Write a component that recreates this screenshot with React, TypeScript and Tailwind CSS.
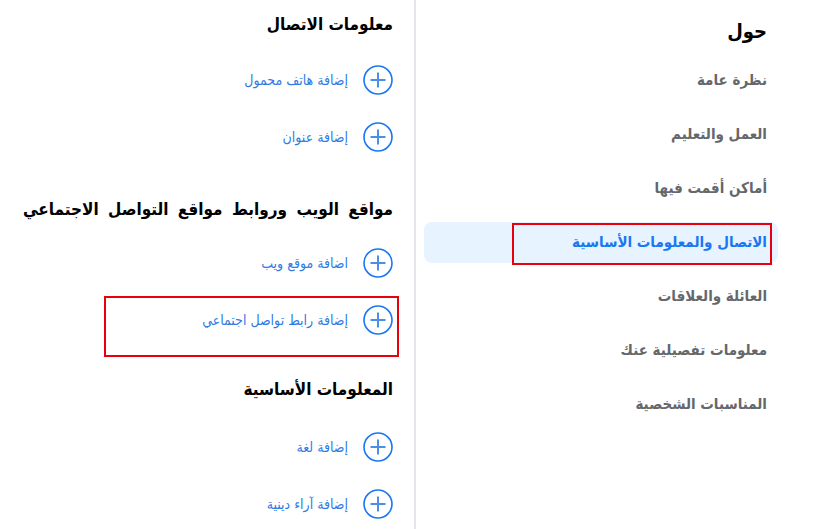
import React from "react";

const sideItems = [
  "نظرة عامة",
  "العمل والتعليم",
  "أماكن أقمت فيها",
  "الاتصال والمعلومات الأساسية",
  "العائلة والعلاقات",
  "معلومات تفصيلية عنك",
  "المناسبات الشخصية",
];

const PlusCircle: React.FC = () => (
  <svg width="30" height="30" viewBox="0 0 30 30" className="shrink-0">
    <circle cx="15" cy="15" r="14" fill="none" stroke="#1877f2" strokeWidth="1.6" />
    <path d="M15 7.5v15M7.5 15h15" stroke="#4b8fe8" strokeWidth="2" />
  </svg>
);

const AddRow: React.FC<{ label: string; marked?: boolean }> = ({ label, marked }) => (
  <div className="relative flex items-center gap-[15px] h-[30px]">
    <PlusCircle />
    <span className="text-[14px] text-[#2f7ae5]">{label}</span>
    {marked && (
      <div className="absolute right-[-6px] top-[-9px] w-[295px] h-[61px] border-2 border-[#e8000b]" />
    )}
  </div>
);

const Section: React.FC<{
  title: string;
  items: string[];
  marked?: number;
  className?: string;
  titleClass?: string;
  listClass?: string;
}> = ({ title, items, marked, className, titleClass, listClass }) => (
  <div className={className}>
    <h2 className={"text-[17px] font-bold text-black leading-[22px] whitespace-nowrap " + (titleClass ?? "")}>
      {title}
    </h2>
    <div className={"flex flex-col gap-[27px] " + (listClass ?? "mt-[30px]")}>
      {items.map((it, i) => (
        <AddRow key={it} label={it} marked={marked === i} />
      ))}
    </div>
  </div>
);

export default function App() {
  return (
    <div
      dir="rtl"
      className="w-[830px] h-[529px] overflow-hidden bg-white flex"
      style={{ fontFamily: '"DejaVu Sans Condensed", "DejaVu Sans", sans-serif' }}
    >
      {/* sidebar */}
      <div className="w-[416px] shrink-0 border-l-2 border-[#e4e6eb] pr-[52px] pl-[8px]">
        <h1 className="pr-[11px] pt-[19px] text-[20px] font-bold text-black leading-[24px]">حول</h1>
        <div className="flex flex-col gap-[13px] mt-[17px]">
          {sideItems.map((it, i) => {
            const active = i === 3;
            return (
              <div
                key={it}
                className={
                  "relative h-[41px] flex items-center pr-[11px] rounded-lg text-[15px] font-bold " +
                  (active ? "bg-[#e7f3ff] text-[#1877f2]" : "text-[#65676b]")
                }
              >
                {it}
                {active && (
                  <div className="absolute right-[6px] top-[1px] w-[260px] h-[42px] border-2 border-[#e8000b]" />
                )}
              </div>
            );
          })}
        </div>
      </div>

      {/* content */}
      <div className="flex-1 pr-[21px] pt-[13px]">
        <Section title="معلومات الاتصال" items={["إضافة هاتف محمول", "إضافة عنوان"]} />
        <Section
          className="mt-[46px]"
          titleClass="[word-spacing:4px]"
          listClass="mt-[28px]"
          title="مواقع الويب وروابط مواقع التواصل الاجتماعي"
          items={["اضافة موقع ويب", "إضافة رابط تواصل اجتماعي"]}
          marked={1}
        />
        <Section
          className="mt-[43px]"
          listClass="mt-[32px]"
          title="المعلومات الأساسية"
          items={["إضافة لغة", "إضافة آراء دينية"]}
        />
      </div>
    </div>
  );
}
